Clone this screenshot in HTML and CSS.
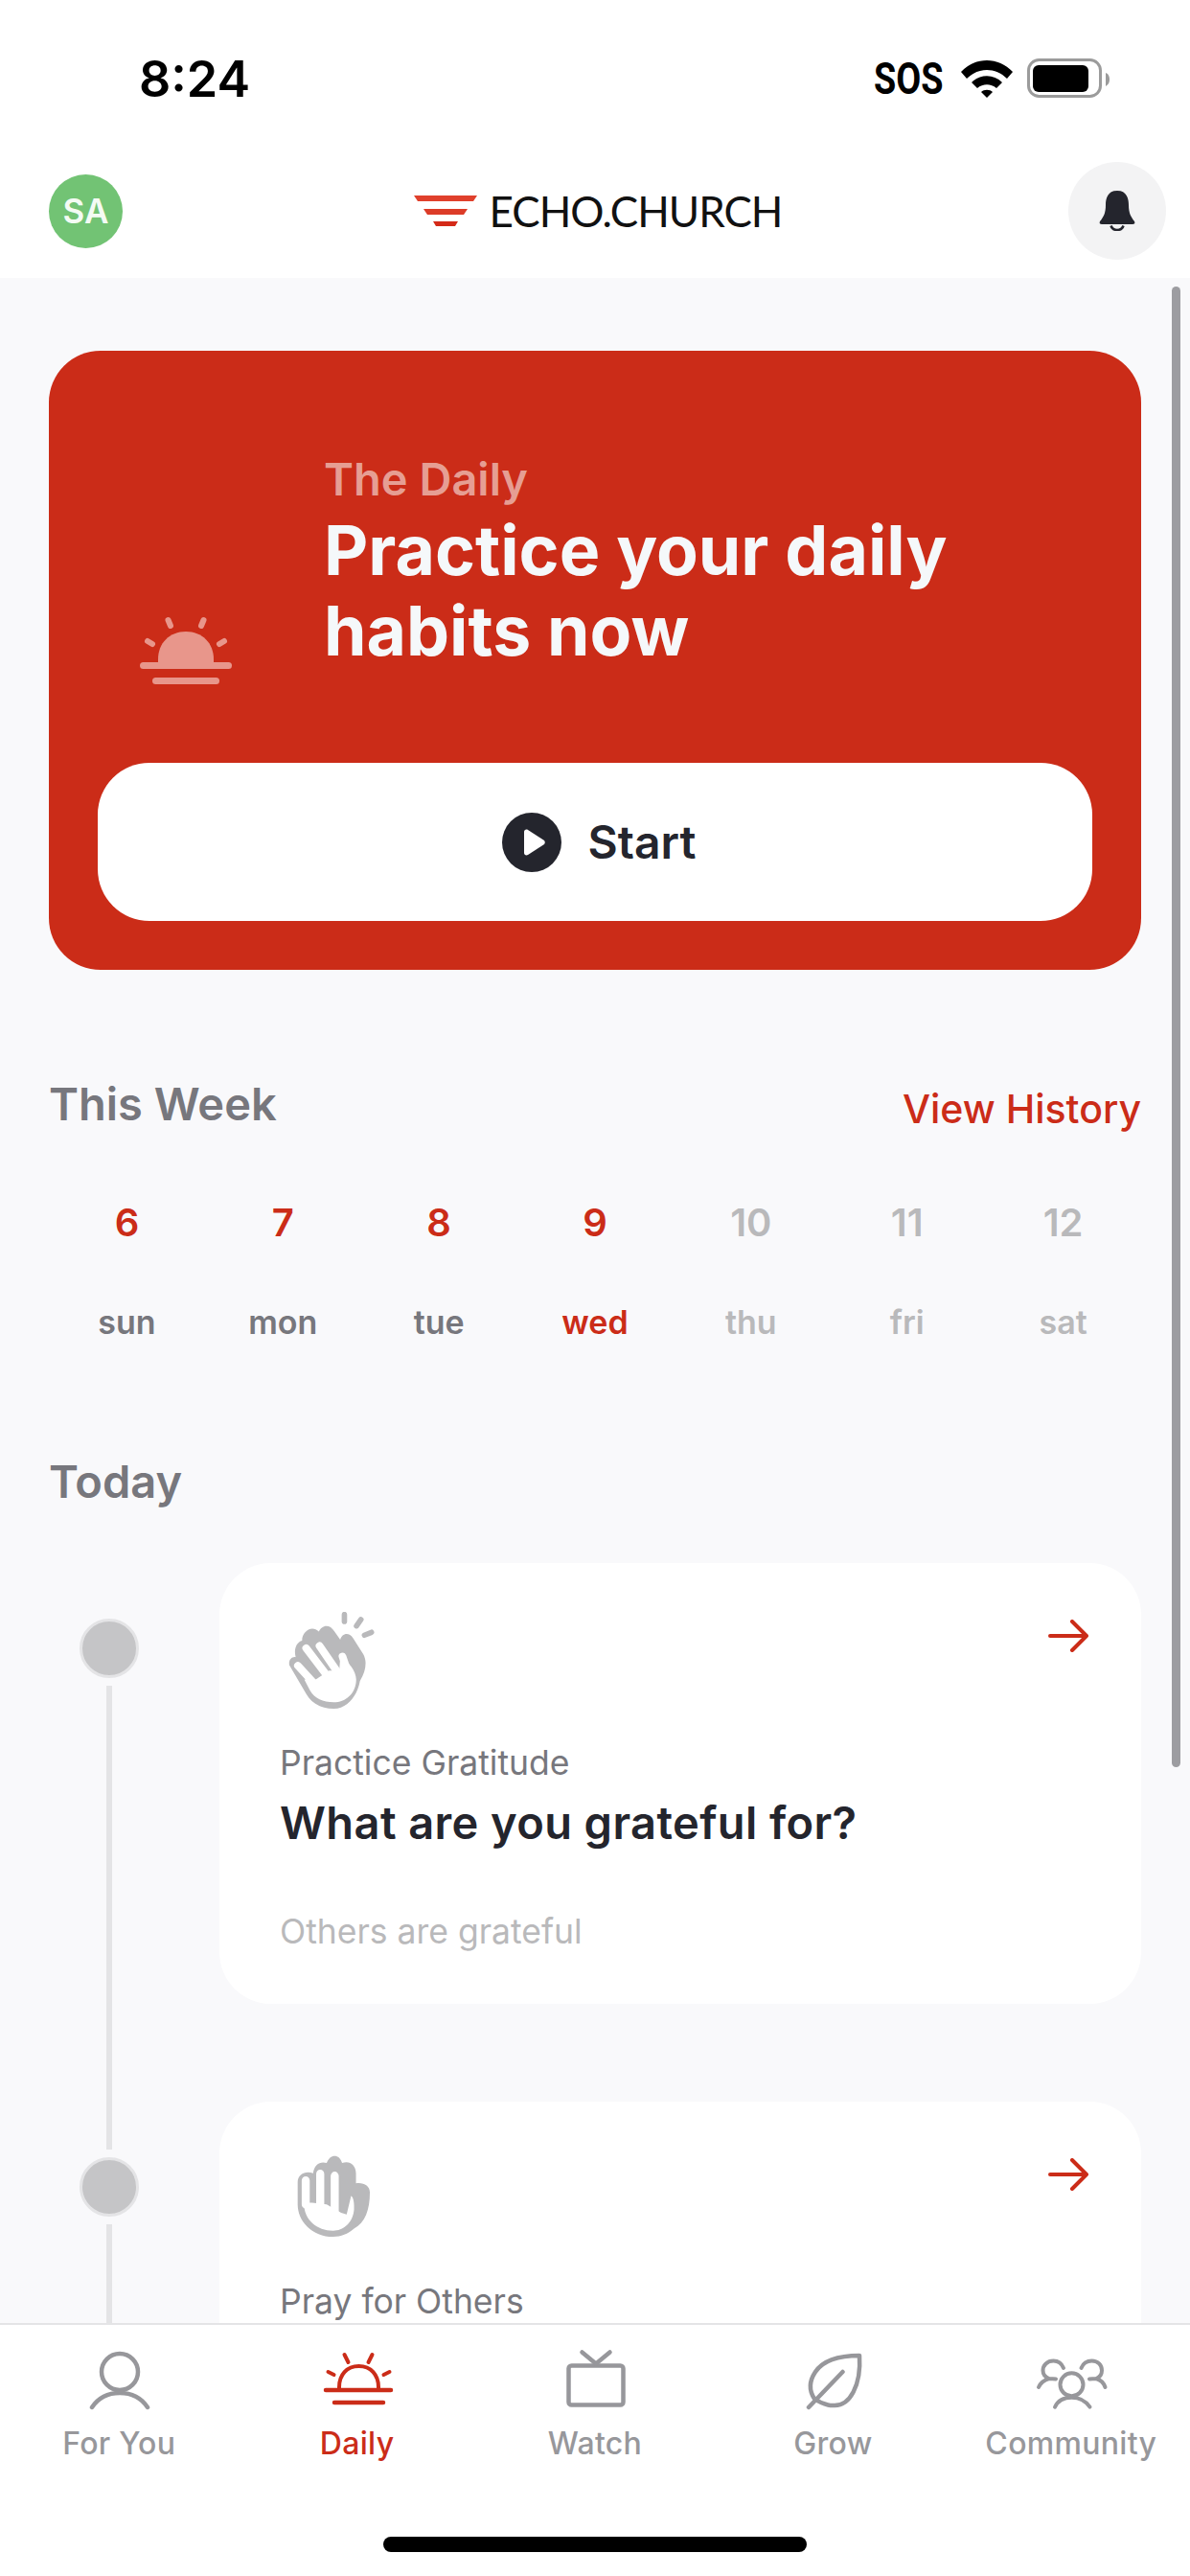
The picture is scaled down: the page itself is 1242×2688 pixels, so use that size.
FILE: index.html
```html
<!doctype html>
<html lang="en">
<head>
    <title>Echo.Church Daily</title>
    <meta charset="utf-8" name="viewport" content="width=device-width,initial-scale=1">
    <link rel="stylesheet" href="styles.css">
</head>
<body>
<div class="phone">
    <div class="top">
        <div class="status">
            <div class="time">8:24</div>
            <div class="status_right">
                <div class="sos">SOS</div>
                <svg class="wifi" width="54" height="40" viewBox="0 0 54 40">
                    <path d="M0 13C15 -3 39 -3 54 13L48 20C36 8 18 8 6 20Z"/>
                    <path d="M11 24C20 15 34 15 43 24L37 30C31 25 23 25 17 30Z"/>
                    <path d="M21 34C24 31 30 31 33 34L27 40Z"/>
                </svg>
                <svg class="battery" width="86" height="42" viewBox="0 0 86 42">
                    <rect x="1.5" y="1.5" width="75" height="38" rx="11" fill="none" stroke="#9b9b9b" stroke-width="3"/>
                    <rect x="6" y="7" width="58" height="28" rx="6"/>
                    <path d="M82 15C85 16 86 19 86 22C86 25 85 27 82 29Z" fill="#9b9b9b"/>
                </svg>
            </div>
        </div>
        <div class="navbar">
            <div class="avatar">SA</div>
            <div class="logo">
                <svg width="66" height="32" viewBox="0 0 66 32">
                    <path d="M0 0H66L62 6H4Z" fill="#e0402c"/>
                    <path d="M10 14H56L52 20H14Z" fill="#dc3c28"/>
                    <path d="M20 27H46L43 32H23Z" fill="#d42a18"/>
                </svg>
                <span>ECHO.CHURCH</span>
            </div>
            <div class="bell">
                <svg width="38" height="42" viewBox="0 0 38 42">
                    <path d="M19 0C9 0 7 8 7 15C7 23 5 27 1 32C0 34 1 35 3 35H35C37 35 38 34 37 32C33 27 31 23 31 15C31 8 29 0 19 0Z" fill="#24252d"/>
                    <path d="M12.5 36.5C13.5 39.5 16 41 19 41C22 41 24.5 39.5 25.5 36.5" fill="none" stroke="#24252d" stroke-width="2.5"/>
                </svg>
            </div>
        </div>
    </div>

    <div class="content">
        <div class="scrollbar"></div>

        <div class="hero">
            <div class="hero_row">
                <svg class="sun" width="96" height="72" viewBox="0 0 96 72">
                    <path d="M19 49V46C19 29 31 17 48 17C65 17 77 29 77 46V49Z" fill="#e8968b"/>
                    <rect x="0" y="49" width="96" height="7" rx="3.5" fill="#e8968b"/>
                    <rect x="13" y="65" width="70" height="7" rx="3.5" fill="#e8968b"/>
                    <path d="M29.5 5L32 11M66.5 5L64 11M8 27L13 30M88 27L83 30" stroke="#e8968b" stroke-width="6" stroke-linecap="round"/>
                </svg>
                <div class="hero_text">
                    <div class="hero_small">The Daily</div>
                    <div class="hero_title">Practice your daily<br>habits now</div>
                </div>
            </div>
            <div class="start">
                <svg width="62" height="62" viewBox="0 0 62 62">
                    <circle cx="31" cy="31" r="31" fill="#24252d"/>
                    <path d="M23 20C23 18 25 17 27 18L44 29C45 30 45 32 44 33L27 44C25 45 23 44 23 42Z" fill="#fff"/>
                </svg>
                <span>Start</span>
            </div>
        </div>

        <div class="week_head">
            <div class="section_title">This Week</div>
            <div class="history">View History</div>
        </div>
        <div class="week">
            <div class="day done"><b>6</b><span>sun</span></div>
            <div class="day done"><b>7</b><span>mon</span></div>
            <div class="day done"><b>8</b><span>tue</span></div>
            <div class="day done now"><b>9</b><span>wed</span></div>
            <div class="day"><b>10</b><span>thu</span></div>
            <div class="day"><b>11</b><span>fri</span></div>
            <div class="day"><b>12</b><span>sat</span></div>
        </div>

        <div class="section_title today">Today</div>

        <div class="step first">
            <div class="rail">
                <div class="dot"></div>
                <div class="line"></div>
            </div>
            <div class="card">
                <svg class="arrow" width="42" height="34" viewBox="0 0 42 34">
                    <path d="M2 17H40M25 2L40 17L25 32" fill="none" stroke="#cb2c18" stroke-width="4" stroke-linecap="round" stroke-linejoin="round"/>
                </svg>
                <div class="card_icon">
                    <svg class="clap" width="91" height="101" viewBox="60 38 272 304">
                        <path d="M65 205C62 190 72 178 85 180C78 155 88 132 105 128C105 100 135 78 158 100C165 82 190 72 207 100L225 125C230 105 252 100 265 120L298 172C310 195 305 225 287 255C278 305 245 342 205 342C165 342 135 325 118 295Z" fill="#b9b9bb"/>
                        <path d="M112 250L148 250L190 222L222 222L225 180C250 190 275 225 275 250C275 295 240 322 205 322C170 322 145 310 130 285Z" fill="#fff"/>
                        <path d="M92 207L150 270M118 152L185 240M160 145L215 225M232 178L250 230" stroke="#fff" stroke-width="24" stroke-linecap="round"/>
                        <path d="M238 46V68M290 62L276 82M323 102L301 111" stroke="#b9b9bb" stroke-width="17" stroke-linecap="round"/>
                    </svg>
                </div>
                <div class="card_small">Practice Gratitude</div>
                <div class="card_title">What are you grateful for?</div>
                <div class="card_note">Others are grateful</div>
            </div>
        </div>

        <div class="step">
            <div class="rail">
                <div class="dot"></div>
                <div class="line"></div>
            </div>
            <div class="card">
                <svg class="arrow" width="42" height="34" viewBox="0 0 42 34">
                    <path d="M2 17H40M25 2L40 17L25 32" fill="none" stroke="#cb2c18" stroke-width="4" stroke-linecap="round" stroke-linejoin="round"/>
                </svg>
                <div class="card_icon">
                    <svg class="hand" width="76" height="85" viewBox="58 45 226 241" preserveAspectRatio="none">
                        <path d="M60 125C60 100 85 90 108 98C112 72 130 62 150 68C160 40 190 40 198 68C220 60 240 72 241 98L241 128C265 125 284 135 284 155C284 205 270 245 235 262C215 278 195 286 170 286C105 286 60 240 60 190Z" fill="#b9b9bb"/>
                        <path d="M80 185H105L150 190L195 215L212 220L226 165C234 170 236 190 235 205C232 245 200 268 170 268C120 268 80 235 80 190Z" fill="#fff"/>
                        <path d="M85 120V190M130 100V190M175 106V215" stroke="#fff" stroke-width="25" stroke-linecap="round"/>
                    </svg>
                </div>
                <div class="card_small">Pray for Others</div>
            </div>
        </div>
    </div>

    <div class="tabbar">
        <div class="tabs">
            <div class="tab">
                <svg width="80" height="64" viewBox="0 0 80 64" fill="none" stroke="#97979b" stroke-width="4.5" stroke-linecap="round">
                    <circle cx="41" cy="24" r="19"/>
                    <path d="M12 61C18 52 28 46 41 46C54 46 64 52 70 61"/>
                </svg>
                <span>For You</span>
            </div>
            <div class="tab active">
                <svg width="80" height="64" viewBox="0 0 80 64" fill="none" stroke="#cb2c18" stroke-width="4" stroke-linecap="round">
                    <path d="M21 43V40C21 27 29 18 41.5 18C54 18 62 27 62 40V43"/>
                    <path d="M7 43H75M16 56H67" stroke-width="4.5"/>
                    <path d="M26.5 6L30.5 14M55.5 6L51.5 14M9.5 24L15.5 27M73.5 24L67.5 27"/>
                </svg>
                <span>Daily</span>
            </div>
            <div class="tab">
                <svg width="80" height="64" viewBox="0 0 80 64" fill="none" stroke="#97979b" stroke-width="4.5" stroke-linejoin="round" stroke-linecap="round">
                    <rect x="12.5" y="17.5" width="57" height="41" rx="3"/>
                    <path d="M26.5 3.5L41 15.5L55.5 3.5"/>
                </svg>
                <span>Watch</span>
            </div>
            <div class="tab">
                <svg width="80" height="64" viewBox="0 0 80 64" fill="none" stroke="#97979b" stroke-width="4.5" stroke-linecap="round" stroke-linejoin="round">
                    <path d="M68 7C48 7 30 12 22 24C16 33 15 43 21 52C32 60 41 59 41 59C58 60 70 38 68 7Z"/>
                    <path d="M15 61L50.5 24"/>
                </svg>
                <span>Grow</span>
            </div>
            <div class="tab">
                <svg width="80" height="64" viewBox="0 0 80 64" fill="none" stroke="#97979b" stroke-width="4" stroke-linecap="round">
                    <circle cx="40.5" cy="37.3" r="12"/>
                    <path d="M23 60.7C26 54 33 50.7 40.5 50.7C48 50.7 55 54 59.5 60.7"/>
                    <path d="M32 20C30 15 26 12.5 21.5 12.5C15 12.5 10.5 17 10.5 22.5C10.5 26 13 29.5 17 31C12 32.5 8 35.5 6 40M17 31C19 31 21 31 24 31.5"/>
                    <path d="M50.5 20C52.5 15 56.5 12.5 61.5 12.5C68 12.5 72 17 72 22.5C72 26 70 29.5 66 31C71 32.5 74 35.5 75.5 40M66 31C64 31 62 31 59 31.5"/>
                </svg>
                <span>Community</span>
            </div>
        </div>
        <div class="home_bar"></div>
    </div>
</div>
</body>
</html>
```

FILE: styles.css
```css
*{
    box-sizing: border-box;
}
body{
    margin: 0;
    font-family: Inter, "Liberation Sans", sans-serif;
}
.phone{
    display: flex;
    flex-direction: column;
    width: 1242px;
    height: 2688px;
    overflow: hidden;
    background-color: #f9f9fb;
}
.top{
    height: 290px;
    flex: none;
    background-color: #ffffff;
}
.status{
    display: flex;
    justify-content: space-between;
    align-items: center;
    height: 164px;
    padding: 0 84px 0 145px;
}
.time{
    font-size: 52px;
    font-weight: 600;
    color: #000000;
}
.status_right{
    display: flex;
    align-items: center;
}
.sos{
    font-family: Roboto, sans-serif;
    font-size: 46px;
    font-weight: 700;
    color: #000000;
    transform: scaleX(0.82);
    transform-origin: right center;
}
.wifi{
    margin: 0 15px 0 19px;
}
.navbar{
    display: flex;
    justify-content: space-between;
    align-items: center;
    padding: 5px 25px 19px 51px;
}
.avatar{
    display: flex;
    justify-content: center;
    align-items: center;
    width: 77px;
    height: 77px;
    border-radius: 50%;
    background-color: #72c374;
    color: #f4fbf4;
    font-size: 35px;
    font-weight: 600;
}
.logo{
    display: flex;
    align-items: center;
    gap: 13px;
    margin-left: 5px;
}
.logo span{
    font-family: Lato, sans-serif;
    font-size: 44px;
    line-height: 32px;
    letter-spacing: -1px;
    color: #111111;
}
.bell{
    display: flex;
    justify-content: center;
    align-items: center;
    width: 102px;
    height: 102px;
    border-radius: 50%;
    background-color: #f3f3f4;
}

.content{
    position: relative;
    flex: 1;
    min-height: 0;
    overflow: hidden;
    padding: 76px 51px 0;
}
.scrollbar{
    position: absolute;
    top: 9px;
    right: 10px;
    width: 9px;
    height: 1545px;
    border-radius: 5px;
    background-color: #9d9da1;
}
.hero{
    height: 646px;
    padding: 0 51px 51px;
    display: flex;
    flex-direction: column;
    justify-content: flex-end;
    border-radius: 54px;
    background-color: #cb2c18;
}
.hero_row{
    display: flex;
    align-items: flex-end;
    gap: 96px;
    padding: 0 0 82px 44px;
}
.sun{
    flex: none;
}
.hero_text{
    margin-bottom: 14px;
}
.hero_small{
    font-size: 47px;
    font-weight: 600;
    line-height: 64px;
    color: #e69e93;
}
.hero_title{
    font-size: 71.5px;
    font-weight: 700;
    line-height: 84px;
    color: #f5f8fa;
}
.start{
    display: flex;
    justify-content: center;
    align-items: center;
    gap: 28px;
    height: 165px;
    border-radius: 54px;
    background-color: #ffffff;
    font-size: 48px;
    font-weight: 600;
    color: #24252d;
}
.start svg{
    margin-left: 8px;
}
.week_head{
    display: flex;
    justify-content: space-between;
    align-items: center;
    margin-top: 110px;
}
.section_title{
    font-size: 47px;
    font-weight: 600;
    line-height: 60px;
    color: #77777d;
}
.history{
    font-size: 41px;
    font-weight: 500;
    color: #cb2c18;
    margin-top: 10px;
}
.week{
    display: grid;
    grid-template-columns: repeat(7, 1fr);
    margin-top: 70px;
}
.day{
    display: flex;
    flex-direction: column;
    align-items: center;
    gap: 56px;
    color: #b9b9bb;
}
.day b{
    font-size: 40px;
    font-weight: 600;
    line-height: 48px;
}
.day span{
    font-size: 34px;
    font-weight: 600;
    line-height: 48px;
}
.day.done b{
    color: #cb2c18;
}
.day.done span{
    color: #77777d;
}
.day.now span{
    color: #cb2c18;
}
.today{
    margin-top: 112px;
}
.step{
    display: flex;
    height: 562px;
}
.step.first{
    margin-top: 55px;
}
.rail{
    display: flex;
    flex-direction: column;
    align-items: center;
    width: 126px;
    flex: none;
    padding-top: 58px;
}
.dot{
    flex: none;
    width: 62px;
    height: 62px;
    border-radius: 50%;
    border: 3px solid #e4e4e6;
    background-color: #c5c5c7;
}
.line{
    flex: 1;
    width: 6px;
    margin: 8px 0 -50px;
    background-color: #e4e4e6;
}
.card{
    position: relative;
    width: 962px;
    height: 460px;
    margin-left: 52px;
    padding: 51px 63px;
    border-radius: 54px;
    background-color: #ffffff;
}
.arrow{
    position: absolute;
    top: 59px;
    right: 55px;
}
.card_icon{
    display: flex;
    align-items: flex-start;
    height: 102px;
}
.clap{
    margin-left: 8px;
}
.hand{
    margin: 5px 0 0 18px;
}
.card_small{
    margin-top: 34px;
    font-size: 35.5px;
    line-height: 44px;
    color: #77777d;
}
.card_title{
    margin-top: 10px;
    font-size: 47px;
    font-weight: 600;
    line-height: 60px;
    letter-spacing: 0.4px;
    color: #24252d;
}
.card_note{
    margin-top: 62px;
    font-size: 35.5px;
    line-height: 44px;
    color: #b9b9bb;
}

.tabbar{
    flex: none;
    height: 264px;
    border-top: 2px solid #e4e4e6;
    background-color: #ffffff;
}
.tabs{
    display: grid;
    grid-template-columns: repeat(5, 1fr);
    height: 221px;
}
.tab{
    display: flex;
    flex-direction: column;
    align-items: center;
    padding-top: 25px;
    gap: 13px;
    font-size: 32px;
    font-weight: 500;
    line-height: 44px;
    letter-spacing: 0.3px;
    color: #97979b;
}
.tab.active{
    color: #cb2c18;
}
.home_bar{
    width: 442px;
    height: 16px;
    margin: 0 auto;
    border-radius: 8px;
    background-color: #000000;
}
```
